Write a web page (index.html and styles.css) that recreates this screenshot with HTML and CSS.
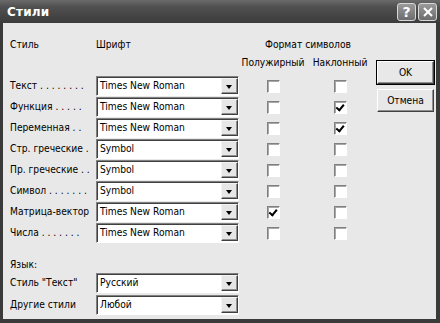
FILE: index.html
```html
<!DOCTYPE html>
<html lang="ru">
<head>
    <meta charset="UTF-8">
    <title>Стили</title>
    <link rel="stylesheet" href="styles.css">
</head>
<body>
<div class="window">
    <!-- Title bar -->
    <div class="titlebar">
        <span class="title">Стили</span>
        <div class="caption-buttons">
            <span class="cap-btn">?</span>
            <span class="cap-btn">
                <svg width="12" height="12" viewBox="0 0 12 12"><path d="M2 2 L10 10 M10 2 L2 10" stroke="#fff" stroke-width="2"/></svg>
            </span>
        </div>
    </div>

    <!-- Dialog content -->
    <div class="client">
        <div class="main">
            <div class="styles-grid">
                <div class="head">Стиль</div>
                <div class="head">Шрифт</div>
                <div class="head format">Формат символов</div>

                <div class="sub"></div>
                <div class="sub"></div>
                <div class="sub center">Полужирный</div>
                <div class="sub center">Наклонный</div>

                <div class="label">Текст . . . . . . . .</div>
                <div class="combo"><span class="value">Times New Roman</span><span class="arrow"></span></div>
                <div class="cell"><span class="check"></span></div>
                <div class="cell"><span class="check"></span></div>

                <div class="label">Функция . . . . .</div>
                <div class="combo"><span class="value">Times New Roman</span><span class="arrow"></span></div>
                <div class="cell"><span class="check"></span></div>
                <div class="cell"><span class="check checked"></span></div>

                <div class="label">Переменная . .</div>
                <div class="combo"><span class="value">Times New Roman</span><span class="arrow"></span></div>
                <div class="cell"><span class="check"></span></div>
                <div class="cell"><span class="check checked"></span></div>

                <div class="label">Стр. греческие .</div>
                <div class="combo"><span class="value">Symbol</span><span class="arrow"></span></div>
                <div class="cell"><span class="check"></span></div>
                <div class="cell"><span class="check"></span></div>

                <div class="label">Пр. греческие . .</div>
                <div class="combo"><span class="value">Symbol</span><span class="arrow"></span></div>
                <div class="cell"><span class="check"></span></div>
                <div class="cell"><span class="check"></span></div>

                <div class="label">Символ . . . . . . .</div>
                <div class="combo"><span class="value">Symbol</span><span class="arrow"></span></div>
                <div class="cell"><span class="check"></span></div>
                <div class="cell"><span class="check"></span></div>

                <div class="label">Матрица-вектор</div>
                <div class="combo"><span class="value">Times New Roman</span><span class="arrow"></span></div>
                <div class="cell"><span class="check checked"></span></div>
                <div class="cell"><span class="check"></span></div>

                <div class="label">Числа . . . . . . .</div>
                <div class="combo"><span class="value">Times New Roman</span><span class="arrow"></span></div>
                <div class="cell"><span class="check"></span></div>
                <div class="cell"><span class="check"></span></div>
            </div>

            <!-- Language section -->
            <div class="lang">
                <div class="lang-title">Язык:</div>
                <div class="lang-row">
                    <div class="label">Стиль "Текст"</div>
                    <div class="combo"><span class="value">Русский</span><span class="arrow"></span></div>
                </div>
                <div class="lang-row">
                    <div class="label">Другие стили</div>
                    <div class="combo"><span class="value">Любой</span><span class="arrow"></span></div>
                </div>
            </div>
        </div>

        <!-- Dialog buttons -->
        <div class="buttons">
            <button class="btn default">OK</button>
            <button class="btn">Отмена</button>
        </div>
    </div>
</div>
</body>
</html>
```

FILE: styles.css
```css
* {
    margin: 0;
    padding: 0;
    box-sizing: border-box;
}

body {
    width: 440px;
    height: 323px;
    overflow: hidden;
    font-family: "DejaVu Sans Condensed", "DejaVu Sans", sans-serif;
    font-size: 10.2px;
    color: #000;
}

.window {
    width: 440px;
    height: 323px;
    background: #3a3a3a;
    padding: 0 4px 4px 3px;
    display: flex;
    flex-direction: column;
}

.titlebar {
    height: 23px;
    margin: 0 -4px 0 -3px;
    padding: 0 3px 0 7px;
    background: linear-gradient(to bottom, #6a6a6a 0%, #505050 30%, #444444 70%, #3c3c3c 100%);
    display: flex;
    align-items: center;
    justify-content: space-between;
}

.title {
    color: #ffffff;
    font-family: "DejaVu Sans", sans-serif;
    font-weight: bold;
    font-size: 12px;
    letter-spacing: 0.2px;
}

.caption-buttons {
    display: flex;
    gap: 2px;
}

.cap-btn {
    width: 19px;
    height: 18px;
    border: 1px solid #d8d8d8;
    border-radius: 3px;
    background: linear-gradient(to bottom, #9a9a9a, #6c6c6c);
    color: #ffffff;
    font-family: "DejaVu Sans", sans-serif;
    font-weight: bold;
    font-size: 14px;
    display: flex;
    align-items: center;
    justify-content: center;
}

.client {
    flex: 1;
    background: #e8e8e8;
    display: flex;
    padding: 14px 0 0 7px;
}

.main {
    width: 366px;
}

.styles-grid {
    display: grid;
    grid-template-columns: 86px 145px 64px 70px;
    grid-template-rows: 16px 23px repeat(8, 21px);
}

.head {
    line-height: 16px;
}

.format {
    grid-column: 3 / 5;
    text-align: center;
}

.sub {
    line-height: 16px;
    padding-top: 2px;
    white-space: nowrap;
}

.center {
    text-align: center;
}

.label {
    line-height: 20px;
    white-space: nowrap;
}

.combo {
    width: 143px;
    height: 20px;
    background: #ffffff;
    border-top: 1px solid #808080;
    border-left: 1px solid #808080;
    border-right: 1px solid #ffffff;
    border-bottom: 1px solid #ffffff;
    box-shadow: inset 1px 1px 0 #404040;
    display: flex;
    align-items: stretch;
}

.value {
    flex: 1;
    padding-left: 3px;
    line-height: 18px;
}

.arrow {
    width: 17px;
    margin: 1px 0 1px 0;
    background: #e6e6e6;
    border-top: 1px solid #f4f4f4;
    border-left: 1px solid #f4f4f4;
    border-right: 1px solid #404040;
    border-bottom: 1px solid #404040;
    box-shadow: inset -1px -1px 0 #909090;
    position: relative;
}

.arrow::after {
    content: "";
    position: absolute;
    left: 4px;
    top: 6px;
    border-left: 3.5px solid transparent;
    border-right: 3.5px solid transparent;
    border-top: 4px solid #000;
}

.cell {
    display: flex;
    justify-content: center;
    padding-top: 4px;
}

.check {
    width: 13px;
    height: 13px;
    background: #ffffff;
    border-top: 1px solid #808080;
    border-left: 1px solid #808080;
    border-right: 1px solid #ffffff;
    border-bottom: 1px solid #ffffff;
    box-shadow: inset 1px 1px 0 #a8a8a8;
    position: relative;
}

.checked::after {
    content: "";
    position: absolute;
    left: 2px;
    top: 1px;
    width: 3px;
    height: 6px;
    border-right: 2px solid #000;
    border-bottom: 2px solid #000;
    transform: rotate(40deg);
    transform-origin: 60% 60%;
}

.lang {
    margin-top: 13px;
}

.lang-title {
    line-height: 16px;
}

.lang-row {
    display: grid;
    grid-template-columns: 86px 143px;
    height: 22px;
}

.lang-row .label {
    line-height: 20px;
}

.buttons {
    display: flex;
    flex-direction: column;
    gap: 5px;
    padding-top: 24px;
    margin-left: 1px;
}

.btn {
    width: 57px;
    height: 23px;
    font-family: "DejaVu Sans Condensed", "DejaVu Sans", sans-serif;
    font-size: 10.2px;
    color: #000;
    background: #e8e8e8;
    border-top: 1px solid #ffffff;
    border-left: 1px solid #ffffff;
    border-right: 1px solid #404040;
    border-bottom: 1px solid #404040;
    box-shadow: inset -1px -1px 0 #909090;
}

.btn.default {
    outline: 1px solid #000;
}
```
